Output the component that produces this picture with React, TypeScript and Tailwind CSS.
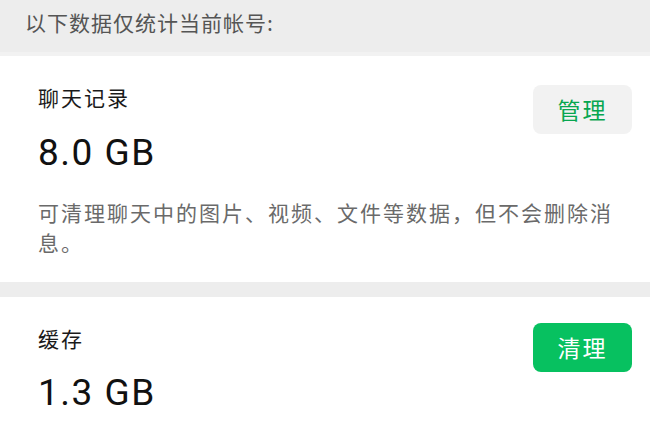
import React from 'react';

interface StorageCardProps {
  title: string;
  size: string;
  action: string;
  primary?: boolean;
  note?: string;
  topPad: string;
  btnTop: string;
  sizeTop: string;
}

const StorageCard: React.FC<StorageCardProps> = ({ title, size, action, primary = false, note, topPad, btnTop, sizeTop }) => {
  return (
    <div className={`bg-white pl-[38px] pr-[18px] ${topPad} pb-[25px]`}>
      <div className="flex items-start justify-between">
        <div>
          <h3 className="text-[21px] leading-[30px] tracking-[2px] text-[#1a1a1a]">{title}</h3>
          <div className={`${sizeTop} font-['Roboto',sans-serif] text-[37px] leading-[44px] tracking-[1.5px] text-[#111]`}>
            {size}
          </div>
        </div>
        <button
          className={`${btnTop} h-[49px] w-[99px] rounded-lg text-[23px] tracking-[2px] ${
            primary ? 'bg-[#07c160] text-white' : 'bg-[#f2f2f2] text-[#07a650]'
          }`}
        >
          {action}
        </button>
      </div>
      {note && (
        <p className="mt-[22px] pr-[10px] text-[21px] leading-[30px] tracking-[2px] text-[#6a6a6a]">{note}</p>
      )}
    </div>
  );
};

export default function App() {
  return (
    <div className="h-[434px] w-[650px] overflow-hidden bg-[#ededed] font-['Noto_Sans_CJK_SC','Noto_Sans',sans-serif]">
      <div className="h-[56px] border-b-4 border-[#f2f2f2] pl-[25px] pt-[7px]">
        <span className="text-[21px] leading-[30px] tracking-[1px] text-[#555]">以下数据仅统计当前帐号:</span>
      </div>
      <StorageCard
        title="聊天记录"
        size="8.0 GB"
        action="管理"
        note="可清理聊天中的图片、视频、文件等数据，但不会删除消息。"
        topPad="pt-[26px]"
        btnTop="mt-[3px]"
        sizeTop="mt-[19px]"
      />
      <div className="h-[15px]" />
      <StorageCard
        title="缓存"
        size="1.3 GB"
        action="清理"
        primary
        topPad="pt-[26px]"
        btnTop="mt-0"
        sizeTop="mt-[18px]"
      />
    </div>
  );
}
